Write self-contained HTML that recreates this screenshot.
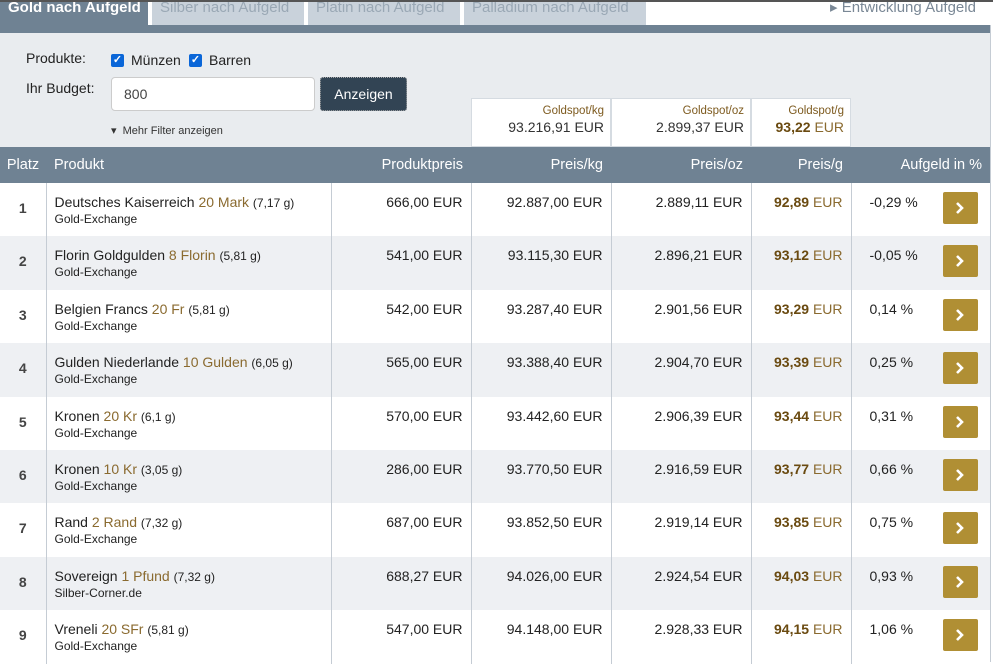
<!DOCTYPE html>
<html><head><meta charset="utf-8"><style>
*{box-sizing:border-box;margin:0;padding:0}
body{width:993px;height:662px;overflow:hidden;background:#fff;font-family:"Liberation Sans",sans-serif;color:#222;font-size:13px;position:relative}
.topline{position:absolute;left:0;top:0;width:993px;height:2px;background:#555;z-index:2}
.tab{position:absolute;top:0;height:25px;font-size:15px;line-height:16px;padding:0 8px;color:#9aa8b5;background:#c9d2db;white-space:nowrap;overflow:hidden}
.tab.act{background:#6f8293;color:#fff;font-weight:bold}
.bar{position:absolute;left:0;top:25px;width:990px;height:8px;background:#6f8293}
.filter{position:absolute;left:0;top:33px;width:990px;height:114px;background:#e9ecef}
.vline{position:absolute;left:990px;top:25px;width:1px;height:637px;background:#c5ccd4}
.lbl{position:absolute;font-size:14px;color:#222}
.cb{position:absolute;width:13px;height:13px;background:#0a66d8;border-radius:2px;color:#fff;font-size:11px;line-height:13px;text-align:center;font-weight:bold}
input{position:absolute;left:111px;top:77px;width:204px;height:34px;border:1px solid #ccc;border-radius:4px;padding-left:12px;font-family:inherit;font-size:14px;color:#444;background:#fff}
.btn{position:absolute;left:320px;top:77px;width:87px;height:34px;background:#324454;border:1px dotted #aaa;border-radius:3px;color:#fff;font-size:14px;line-height:33px;text-align:center}
.spot{position:absolute;top:98px;height:49px;background:#fff;border:1px solid #d5dbe1;text-align:right;padding:6px 6px 0 0}
.spot .a{font-size:11.5px;color:#7d5a1e}
.spot .b{font-size:14px;color:#333;margin-top:2px}
table{position:absolute;left:0;top:147px;width:990px;border-collapse:collapse}
th{background:#6f8293;color:#fff;font-weight:normal;font-size:14.5px;height:36px;text-align:right;padding-right:8px}
td{height:53.4px;vertical-align:top;padding-top:11px;text-align:right;padding-right:8px;border-left:1px solid #c5ccd4;font-size:14px;color:#222}
tr:nth-child(odd) td{background:#eef0f3}
td.p{text-align:center;padding-right:0;border-left:none;font-weight:bold;color:#444;padding-top:17px}
td.n{text-align:left;padding-left:8px}
.g{color:#8a6a2f}
.sm{font-size:12px}
.sub{font-size:12px;margin-top:2px}
b.g{color:#6a4a10}
td.a{text-align:left;padding-left:18px;position:relative}
.arr{position:absolute;right:12px;top:9px;width:35px;height:32px;background:#b08f34;border-radius:2px}
.arr svg{position:absolute;left:12px;top:10px}
</style></head><body>
<div class="topline"></div>
<div class="tab act" style="left:0;width:148px">Gold nach Aufgeld</div>
<div class="tab" style="left:152px;width:152px">Silber nach Aufgeld</div>
<div class="tab" style="left:308px;width:152px">Platin nach Aufgeld</div>
<div class="tab" style="left:464px;width:182px">Palladium nach Aufgeld</div>
<div style="position:absolute;left:830px;top:0;font-size:15px;line-height:16px;color:#7a8896;white-space:nowrap">▸ Entwicklung Aufgeld</div>
<div class="bar"></div>
<div class="filter"></div>
<div class="vline"></div>
<div class="lbl" style="left:26px;top:50px">Produkte:</div>
<div class="cb" style="left:111px;top:54px">✓</div>
<div class="lbl" style="left:131px;top:52px">Münzen</div>
<div class="cb" style="left:189px;top:54px">✓</div>
<div class="lbl" style="left:209px;top:52px">Barren</div>
<div class="lbl" style="left:26px;top:80px">Ihr Budget:</div>
<input value="800">
<div class="btn">Anzeigen</div>
<div style="position:absolute;left:111px;top:124px;font-size:11px;color:#333">▾&nbsp; Mehr Filter anzeigen</div>
<div class="spot" style="left:471px;width:140px"><div class="a">Goldspot/kg</div><div class="b">93.216,91 EUR</div></div>
<div class="spot" style="left:611px;width:140px"><div class="a">Goldspot/oz</div><div class="b">2.899,37 EUR</div></div>
<div class="spot" style="left:751px;width:100px"><div class="a">Goldspot/g</div><div class="b"><b class="g">93,22</b> <span class="g">EUR</span></div></div>
<table>
<tr><th style="width:46px;text-align:center;padding:0">Platz</th><th style="width:285px;text-align:left;padding-left:8px">Produkt</th><th style="width:140px">Produktpreis</th><th style="width:140px">Preis/kg</th><th style="width:140px">Preis/oz</th><th style="width:100px">Preis/g</th><th>Aufgeld in %</th></tr>
<tr><td class="p">1</td><td class="n">Deutsches Kaiserreich <span class="g">20 Mark</span> <span class="sm">(7,17 g)</span><div class="sub">Gold-Exchange</div></td><td>666,00 EUR</td><td>92.887,00 EUR</td><td>2.889,11 EUR</td><td><b class="g">92,89</b> <span class="g">EUR</span></td><td class="a">-0,29 %<div class="arr"><svg width="10" height="12"><path d="M2 1l5 5-5 5" stroke="#fff" stroke-width="2.6" fill="none"/></svg></div></td></tr>
<tr><td class="p">2</td><td class="n">Florin Goldgulden <span class="g">8 Florin</span> <span class="sm">(5,81 g)</span><div class="sub">Gold-Exchange</div></td><td>541,00 EUR</td><td>93.115,30 EUR</td><td>2.896,21 EUR</td><td><b class="g">93,12</b> <span class="g">EUR</span></td><td class="a">-0,05 %<div class="arr"><svg width="10" height="12"><path d="M2 1l5 5-5 5" stroke="#fff" stroke-width="2.6" fill="none"/></svg></div></td></tr>
<tr><td class="p">3</td><td class="n">Belgien Francs <span class="g">20 Fr</span> <span class="sm">(5,81 g)</span><div class="sub">Gold-Exchange</div></td><td>542,00 EUR</td><td>93.287,40 EUR</td><td>2.901,56 EUR</td><td><b class="g">93,29</b> <span class="g">EUR</span></td><td class="a">0,14 %<div class="arr"><svg width="10" height="12"><path d="M2 1l5 5-5 5" stroke="#fff" stroke-width="2.6" fill="none"/></svg></div></td></tr>
<tr><td class="p">4</td><td class="n">Gulden Niederlande <span class="g">10 Gulden</span> <span class="sm">(6,05 g)</span><div class="sub">Gold-Exchange</div></td><td>565,00 EUR</td><td>93.388,40 EUR</td><td>2.904,70 EUR</td><td><b class="g">93,39</b> <span class="g">EUR</span></td><td class="a">0,25 %<div class="arr"><svg width="10" height="12"><path d="M2 1l5 5-5 5" stroke="#fff" stroke-width="2.6" fill="none"/></svg></div></td></tr>
<tr><td class="p">5</td><td class="n">Kronen <span class="g">20 Kr</span> <span class="sm">(6,1 g)</span><div class="sub">Gold-Exchange</div></td><td>570,00 EUR</td><td>93.442,60 EUR</td><td>2.906,39 EUR</td><td><b class="g">93,44</b> <span class="g">EUR</span></td><td class="a">0,31 %<div class="arr"><svg width="10" height="12"><path d="M2 1l5 5-5 5" stroke="#fff" stroke-width="2.6" fill="none"/></svg></div></td></tr>
<tr><td class="p">6</td><td class="n">Kronen <span class="g">10 Kr</span> <span class="sm">(3,05 g)</span><div class="sub">Gold-Exchange</div></td><td>286,00 EUR</td><td>93.770,50 EUR</td><td>2.916,59 EUR</td><td><b class="g">93,77</b> <span class="g">EUR</span></td><td class="a">0,66 %<div class="arr"><svg width="10" height="12"><path d="M2 1l5 5-5 5" stroke="#fff" stroke-width="2.6" fill="none"/></svg></div></td></tr>
<tr><td class="p">7</td><td class="n">Rand <span class="g">2 Rand</span> <span class="sm">(7,32 g)</span><div class="sub">Gold-Exchange</div></td><td>687,00 EUR</td><td>93.852,50 EUR</td><td>2.919,14 EUR</td><td><b class="g">93,85</b> <span class="g">EUR</span></td><td class="a">0,75 %<div class="arr"><svg width="10" height="12"><path d="M2 1l5 5-5 5" stroke="#fff" stroke-width="2.6" fill="none"/></svg></div></td></tr>
<tr><td class="p">8</td><td class="n">Sovereign <span class="g">1 Pfund</span> <span class="sm">(7,32 g)</span><div class="sub">Silber-Corner.de</div></td><td>688,27 EUR</td><td>94.026,00 EUR</td><td>2.924,54 EUR</td><td><b class="g">94,03</b> <span class="g">EUR</span></td><td class="a">0,93 %<div class="arr"><svg width="10" height="12"><path d="M2 1l5 5-5 5" stroke="#fff" stroke-width="2.6" fill="none"/></svg></div></td></tr>
<tr><td class="p">9</td><td class="n">Vreneli <span class="g">20 SFr</span> <span class="sm">(5,81 g)</span><div class="sub">Gold-Exchange</div></td><td>547,00 EUR</td><td>94.148,00 EUR</td><td>2.928,33 EUR</td><td><b class="g">94,15</b> <span class="g">EUR</span></td><td class="a">1,06 %<div class="arr"><svg width="10" height="12"><path d="M2 1l5 5-5 5" stroke="#fff" stroke-width="2.6" fill="none"/></svg></div></td></tr>
</table>
</body></html>
